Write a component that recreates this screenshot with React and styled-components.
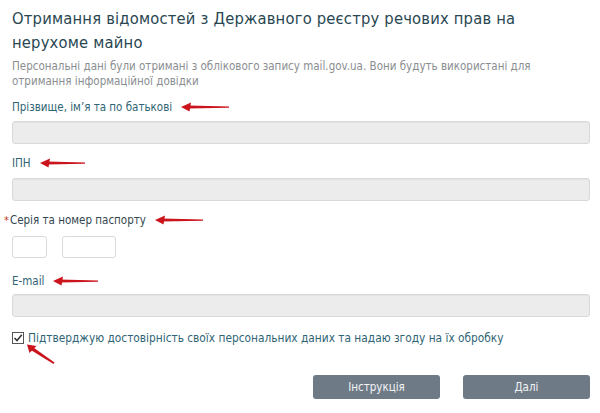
import React from "react";
import styled, { createGlobalStyle } from "styled-components";

const Global = createGlobalStyle`
  html, body { margin: 0; padding: 0; background: #fff; }
  body { font-family: "DejaVu Sans Condensed", "DejaVu Sans", Verdana, sans-serif; }
  * { box-sizing: border-box; }
`;

const Page = styled.div`
  width: 600px;
  height: 413px;
  padding: 7px 10px 0 12px;
  display: flex;
  flex-direction: column;
  overflow: hidden;
`;

const Title = styled.h1`
  margin: 0;
  font-size: 16.4px;
  line-height: 24px;
  font-weight: normal;
  color: #294752;
  letter-spacing: 0.2px;
  white-space: nowrap;
`;

const Intro = styled.p`
  margin: 4px 0 0;
  font-size: 11.5px;
  line-height: 15px;
  color: #8a8e91;
  white-space: nowrap;
`;

const Field = styled.div`
  display: flex;
  flex-direction: column;
  margin-top: ${(p) => p.$top}px;
  gap: ${(p) => p.$gap}px;
`;

const LabelRow = styled.div`
  display: flex;
  align-items: center;
  height: 16px;
  margin-left: ${(p) => (p.$required ? "-8px" : "0")};
`;

const Label = styled.label`
  font-size: 11.5px;
  line-height: 16px;
  color: ${(p) => (p.$dark ? "#34474f" : "#2f6474")};
  white-space: nowrap;
`;

const Star = styled.span`
  color: #c0392b;
  font-size: 11px;
  margin-right: 1px;
`;

const Arrow = styled.svg`
  margin-left: 9px;
  flex: none;
`;

const TextInput = styled.div`
  height: 23px;
  background: #ececec;
  border: 1px solid #d9d9d9;
  border-radius: 3px;
  box-shadow: inset 0 1px 1px rgba(0, 0, 0, 0.04);
`;

const SmallRow = styled.div`
  display: flex;
  gap: 15px;
`;

const SmallInput = styled.div`
  width: ${(p) => p.$w}px;
  height: 22px;
  background: #fff;
  border: 1px solid #dadada;
  border-radius: 3px;
`;

const CheckRow = styled.div`
  position: relative;
  display: flex;
  align-items: center;
  gap: 3px;
  margin-top: 13px;
  height: 16px;
`;

const CheckText = styled.span`
  font-size: 11.8px;
  color: #2f6474;
  white-space: nowrap;
`;

const DiagArrow = styled.svg`
  position: absolute;
  left: 14px;
  top: 14px;
`;

const Buttons = styled.div`
  display: flex;
  justify-content: flex-end;
  gap: 23px;
  margin-top: 29px;
`;

const Button = styled.button`
  width: 127px;
  height: 24px;
  border: none;
  border-radius: 3px;
  background: #6e7b87;
  color: #f2f4f6;
  font-family: "DejaVu Sans Condensed", "DejaVu Sans", Verdana, sans-serif;
  font-size: 11.5px;
  padding: 0;
`;

const RedArrow = ({ w = 49 }) => (
  <Arrow width={w} height={10} viewBox={`0 0 ${w} 10`}>
    <path d={`M7 3.6 L${w - 1} 4.4 L${w - 1} 5.8 L7 6.6 Z`} fill="#cc141c" />
    <polygon points="0,5 10,0.5 8.5,9.5" fill="#cc141c" />
  </Arrow>
);

const Check = () => (
  <svg width="13" height="13" viewBox="0 0 13 13">
    <rect x="0.5" y="0.5" width="11" height="11" fill="#fff" stroke="#555" strokeWidth="1" />
    <path d="M2.5 6 L5 8.6 L9.8 2.8" fill="none" stroke="#333" strokeWidth="1.5" />
  </svg>
);

export default function App() {
  return (
    <>
      <Global />
      <Page>
        <Title>
          Отримання відомостей з Державного реєстру речових прав на
          <br />
          нерухоме майно
        </Title>
        <Intro>
          Персональні дані були отримані з облікового запису mail.gov.ua. Вони будуть використані для
          <br />
          отримання інформаційної довідки
        </Intro>

        <Field $top={10} $gap={6}>
          <LabelRow>
            <Label>Прізвище, ім’я та по батькові</Label>
            <RedArrow />
          </LabelRow>
          <TextInput />
        </Field>

        <Field $top={11} $gap={7}>
          <LabelRow>
            <Label>ІПН</Label>
            <RedArrow w={46} />
          </LabelRow>
          <TextInput />
        </Field>

        <Field $top={11} $gap={8}>
          <LabelRow $required>
            <Label $dark>
              <Star>*</Star>Серія та номер паспорту
            </Label>
            <RedArrow />
          </LabelRow>
          <SmallRow>
            <SmallInput $w={35} />
            <SmallInput $w={54} />
          </SmallRow>
        </Field>

        <Field $top={15} $gap={5}>
          <LabelRow>
            <Label>E-mail</Label>
            <RedArrow w={46} />
          </LabelRow>
          <TextInput />
        </Field>

        <CheckRow>
          <Check />
          <CheckText>Підтверджую достовірність своїх персональних даних та надаю згоду на їх обробку</CheckText>
          <DiagArrow width="30" height="22" viewBox="0 0 30 22">
            <path d="M6 2.5 L28.5 18.5 L27.5 20 L4 5.5 Z" fill="#cc141c" />
            <polygon points="1,0.5 10.5,2 3.5,9" fill="#cc141c" />
          </DiagArrow>
        </CheckRow>

        <Buttons>
          <Button>Інструкція</Button>
          <Button>Далі</Button>
        </Buttons>
      </Page>
    </>
  );
}
